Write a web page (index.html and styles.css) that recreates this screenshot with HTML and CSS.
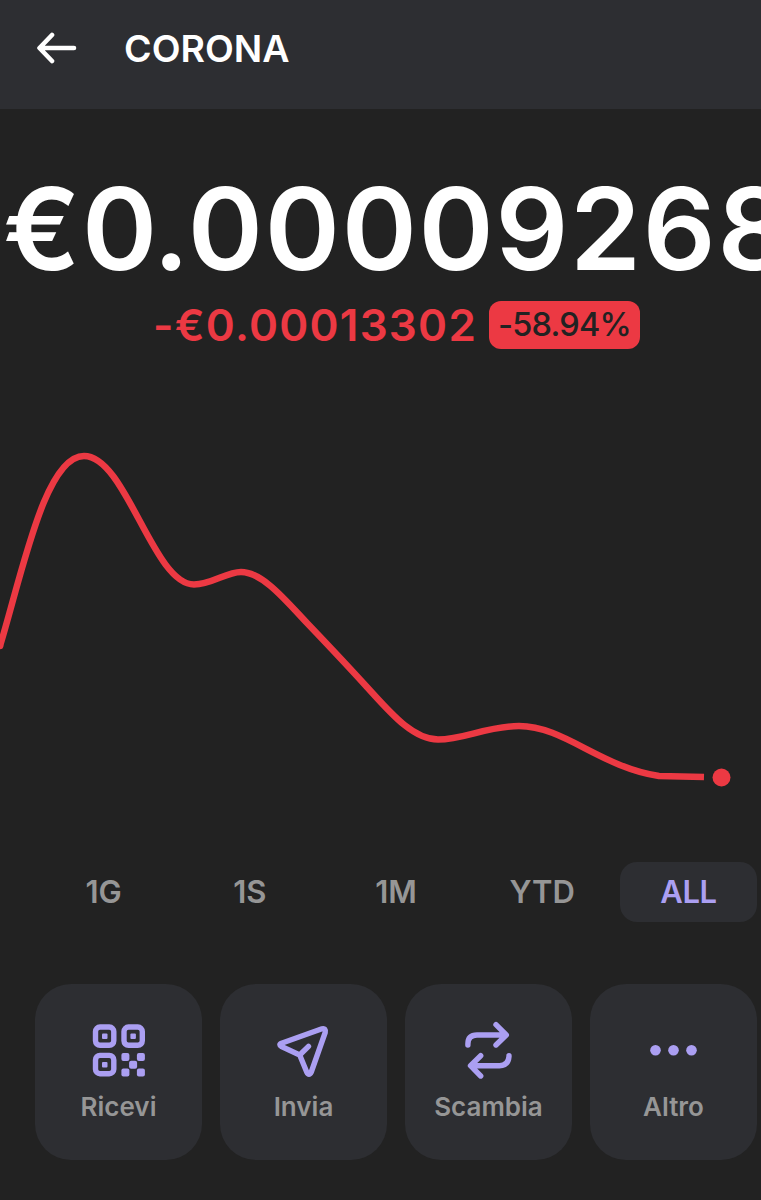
FILE: index.html
```html
<!DOCTYPE html>
<html lang="it">
<head>
    <meta charset="UTF-8">
    <meta name="viewport" content="width=device-width, initial-scale=1.0">
    <title>CORONA</title>
    <link rel="stylesheet" href="styles.css">
</head>
<body>
    <header class="header">
        <svg class="back" width="40" height="32" viewBox="0 0 40 32">
            <path d="M15 3 L2.500 16 L15 29 M3 16 H37"/>
        </svg>
        <h1>CORONA</h1>
    </header>
    <main>
        <div class="price">€0<span class="dot">.</span>00009268</div>
        <div class="change">
            <span class="amount">-€0.00013302</span>
            <span class="badge">-58.94%</span>
        </div>
        <svg class="chart" width="761" height="400" viewBox="0 420 761 400">
            <path d="M0 646 C22 574 45 456 84 456 C126 456 153 584.500 194 584.500 C212 584.500 226 572 241 572 C263 572 287 602 307 623 C328 645 346 664 366 686 C389 711 412 739.500 438 739.500 C464 739.500 487 726 519 726 C564 726 600 767 659 776 L704 777"/>
            <circle class="start" cx="0" cy="646" r="3.250"/>
            <circle cx="721.500" cy="777.500" r="9"/>
        </svg>
        <nav class="tabs">
            <button>1G</button>
            <button>1S</button>
            <button>1M</button>
            <button>YTD</button>
            <button class="active">ALL</button>
        </nav>
        <div class="actions">
            <button class="card">
                <svg width="60" height="60" viewBox="0 0 60 60">
                    <g class="line">
                        <rect x="6.500" y="7" width="18.300" height="18.300" rx="4.500"/>
                        <rect x="35" y="7" width="18.300" height="18.300" rx="4.500"/>
                        <rect x="6.500" y="35.400" width="18.300" height="18.300" rx="4.500"/>
                    </g>
                    <g class="solid">
                        <rect x="13" y="13.400" width="5.500" height="5.500" rx="1"/>
                        <rect x="41.400" y="13.400" width="5.500" height="5.500" rx="1"/>
                        <rect x="13" y="41.900" width="5.500" height="5.500" rx="1"/>
                        <rect x="32.400" y="32.900" width="8" height="8" rx="2"/>
                        <rect x="47.900" y="32.900" width="8" height="8" rx="2"/>
                        <rect x="40.100" y="40.700" width="8" height="8" rx="2"/>
                        <rect x="32.400" y="48.400" width="8" height="8" rx="2"/>
                        <rect x="47.900" y="48.400" width="8" height="8" rx="2"/>
                    </g>
                </svg>
                <span>Ricevi</span>
            </button>
            <button class="card">
                <svg width="60" height="60" viewBox="0 0 60 60">
                    <path class="line" d="M48 8.800 L7.500 23.300 Q4.200 24.800 7.500 26.500 L25.700 35 L32.700 52 Q35 56.500 37.300 52 L51.200 12.500 Q52 7.700 48 8.800 Z M25.700 35 L34.500 26.300"/>
                </svg>
                <span>Invia</span>
            </button>
            <button class="card">
                <svg width="60" height="60" viewBox="0 0 60 60">
                    <path class="line" d="M8.900 25 V24 Q8.900 15 18 15 H46.500 M37 4.700 L47.300 15 L37 25 M50 35.700 V36.500 Q49.200 45.700 40.500 45.700 H12 M21.700 35.700 L11.500 45.700 L21.700 56"/>
                </svg>
                <span>Scambia</span>
            </button>
            <button class="card">
                <svg width="60" height="60" viewBox="0 0 60 60">
                    <g class="solid">
                        <circle cx="11.500" cy="30.300" r="5.300"/>
                        <circle cx="29.500" cy="30.300" r="5.300"/>
                        <circle cx="47.500" cy="30.300" r="5.300"/>
                    </g>
                </svg>
                <span>Altro</span>
            </button>
        </div>
    </main>
</body>
</html>
```
FILE: styles.css
```css
body {
    font-family: Inter, sans-serif;
    font-weight: 600;
    margin: 0;
    height: 1200px;
    background-color: #222222;
    color: #fff;
    overflow: hidden;
}
.header {
    display: flex;
    align-items: center;
    box-sizing: border-box;
    height: 109px;
    padding: 0 37px 14px;
    background: #2d2e32;
}
.back {
    fill: none;
    stroke: #fff;
    stroke-width: 4.6;
    stroke-linecap: round;
    stroke-linejoin: round;
}
h1 {
    margin: 3px 0 0 47px;
    font-size: 37.5px;
    font-weight: 600;
    line-height: 46px;
}
.price {
    margin-top: 50px;
    padding-left: 3px;
    font-size: 114px;
    line-height: 140px;
    letter-spacing: 1.7px;
    white-space: nowrap;
}
.dot {
    margin-left: -6px;
    letter-spacing: -1.5px;
}
.change {
    display: flex;
    align-items: center;
    height: 48px;
    margin-top: 2px;
    padding-left: 153px;
    white-space: nowrap;
}
.amount {
    width: 321px;
    font-size: 44px;
    letter-spacing: 1.25px;
    color: #ec3943;
}
.badge {
    box-sizing: border-box;
    width: 151px;
    height: 48px;
    margin-left: 15px;
    border-radius: 12px;
    background: #ec3943;
    color: #222222;
    font-size: 32.5px;
    font-weight: 550;
    line-height: 47px;
    letter-spacing: -0.8px;
    text-align: center;
}
.chart {
    display: block;
    margin-top: 71px;
    fill: none;
    stroke: #ec3943;
    stroke-width: 6.5;
    stroke-linejoin: round;
}
.chart circle {
    fill: #ec3943;
    stroke: none;
}
button {
    padding: 0;
    border: none;
    background: none;
    font: inherit;
    color: #969696;
}
.tabs {
    display: grid;
    grid-template-columns: repeat(5, 1fr);
    gap: 9px;
    margin: 42px 4px 0 35px;
}
.tabs button {
    height: 60px;
    padding-bottom: 2px;
    border-radius: 17px;
    font-size: 31px;
}
.tabs .active {
    background: #2d2e32;
    color: #ab9ff2;
    letter-spacing: -0.5px;
}
.actions {
    display: grid;
    grid-template-columns: repeat(4, 1fr);
    gap: 18px;
    margin: 62px 4px 0 35px;
}
.card {
    display: flex;
    flex-direction: column;
    align-items: center;
    box-sizing: border-box;
    height: 176px;
    padding-top: 36px;
    border-radius: 36px;
    background: #2d2e32;
    font-size: 26px;
    line-height: 34px;
}
.card span {
    margin-top: 10px;
}
.line {
    fill: none;
    stroke: #ab9ff2;
    stroke-width: 5.4;
    stroke-linecap: round;
    stroke-linejoin: round;
}
.solid {
    fill: #ab9ff2;
}
```
